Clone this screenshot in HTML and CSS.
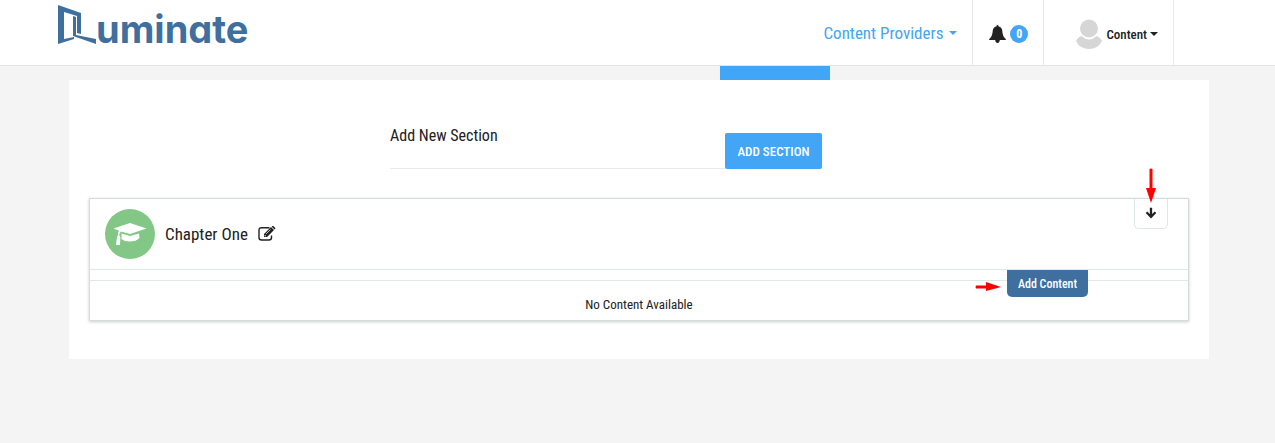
FILE: index.html
```html
<!DOCTYPE html>
<html lang="en">
<head>
<meta charset="utf-8">
<meta name="viewport" content="width=device-width, initial-scale=1">
<title>Luminate</title>
<link rel="stylesheet" href="styles.css">
</head>
<body>
<header class="topbar">
  <a class="logo" href="#" aria-label="Luminate">
    <svg class="logo-mark" viewBox="0 0 38 40" aria-hidden="true">
      <path fill="#3e6f9f" fill-rule="evenodd" d="M0 0L23 8V29L19 28V11L6 7V34L16 32V34L0 39Z"/>
      <path fill="#3e6f9f" d="M15 11L18 12V30L38 34V39L15 31Z"/>
    </svg>
    <span class="logo-text">uminate</span>
  </a>
  <nav class="nav">
    <button class="nav-item providers" type="button">Content Providers <span class="caret"></span></button>
    <button class="nav-item alerts" type="button" aria-label="Notifications">
      <svg class="bell" viewBox="0 0 17 18" aria-hidden="true"><path fill="#222" d="M8.500 0Q9.700 0 9.700 1.500Q13 2.300 13.300 6Q13.400 11 16.800 14V15H10.800Q10.500 18 8.500 18Q6.500 18 6.200 15H.2V14Q3.600 11 3.700 6Q4 2.300 7.300 1.500Q7.300 0 8.500 0Z"/></svg>
      <span class="badge">0</span>
    </button>
    <button class="nav-item account" type="button">
      <svg class="avatar" viewBox="0 0 28 31" aria-hidden="true"><path fill="#d6d6d6" d="M1 22Q3 18 6.500 17Q14 24 21.500 17Q25 18 27 22Q23 30 14 30Q5 30 1 22Z"/><circle cx="14" cy="9.500" r="9" fill="#d6d6d6"/></svg>
      <span>Content</span><span class="caret"></span>
    </button>
  </nav>
</header>
<div class="strip"><span class="strip-tab"></span></div>
<main class="page">
  <form class="add-form">
    <div class="field">
      <label for="section">Add New Section</label>
      <input id="section" type="text">
    </div>
    <button class="add-section" type="button">ADD SECTION</button>
  </form>
  <section class="chapter">
    <div class="chapter-head">
      <span class="chapter-icon">
        <svg viewBox="0 0 34 24" aria-hidden="true"><path fill="#fff" d="M17 1L33.500 6.500L17 12L8 9.500Q6.500 10.500 6.200 13L7.300 15L7 23H3L4 15L5 13Q5 10 6 8.700L.5 6.500ZM8.500 11.500L17 14L26 11.500L26.500 16Q23 19.500 17 19.500Q11 19.500 8.500 17Z"/></svg>
      </span>
      <h2>Chapter One</h2>
      <button class="edit" type="button" aria-label="Edit chapter">
        <svg viewBox="0 0 18 16" aria-hidden="true"><path fill="none" stroke="#222" stroke-width="1.400" d="M11.500 1.700H3.500Q1 1.700 1 4.200V11.500Q1 14 3.500 14H11Q13.500 14 13.500 11.500V9.500"/><path fill="#222" d="M6 8L13 1L16 4L9 11H6ZM13.700.7L14.400 0H15.400L17.300 2V2.800L16.600 3.500Z"/><path d="M8 8L12.500 3.500M7 9V10H8" fill="none" stroke="#fff" stroke-width=".7"/></svg>
      </button>
    </div>
    <div class="chapter-gap"></div>
    <p class="empty">No Content Available</p>
    <button class="toggle" type="button" aria-label="Expand chapter"><svg viewBox="0 0 12 12" aria-hidden="true"><path fill="none" stroke="#222" stroke-width="2.300" d="M6 .8V10M1.500 5.300L6 9.800L10.500 5.300"/></svg></button>
    <button class="add-content" type="button">Add Content</button>
    <svg class="pointer pointer-down" viewBox="0 0 10 35" aria-hidden="true"><path fill="#f00" d="M3.500 1Q5 0 6.500 1V20H10L5 35L0 20H3.500Z"/></svg>
    <svg class="pointer pointer-right" viewBox="0 0 26 10" aria-hidden="true"><path fill="#f00" d="M1 3.500H11V0L26 5L11 9V6.500H1Q0 5 1 3.500Z"/></svg>
  </section>
</main>
</body>
</html>
```
FILE: styles.css
```css
* { box-sizing: border-box; }
body { margin: 0; background: #f4f4f4; color: #212121; font-family: "Roboto Condensed", "Liberation Sans Narrow", Roboto, sans-serif; font-size: 16px; }
button { margin: 0; padding: 0; border: 0; background: none; color: inherit; font: inherit; cursor: pointer; }
svg { display: block; }
.topbar { display: flex; justify-content: space-between; height: 66px; padding: 0 101px 0 58px; background: #fff; border-bottom: 1px solid #e4e4e4; }
.logo { display: flex; align-items: flex-start; padding-top: 5px; color: #3e6f9f; text-decoration: none; }
.logo-mark { width: 38px; height: 40px; }
.logo-text { font: 700 38px/49px Inter, Lato, sans-serif; font-feature-settings: "cv11"; }
.nav { display: flex; }
.nav-item { display: flex; align-items: center; border-right: 1px solid #e8e8e8; }
.providers { gap: 6px; padding: 1px 15px 0 0; color: #42a5f5; font-size: 17px; }
.caret { border: 4px solid transparent; border-top-color: currentColor; border-bottom: 0; }
.alerts { gap: 4px; padding: 2px 15px 0 16px; }
.bell { width: 17px; height: 18px; }
.badge { width: 18px; height: 18px; border-radius: 50%; background: #42a5f5; color: #fff; font-size: 12px; font-weight: 700; line-height: 18px; text-align: center; }
.account { gap: 3px; padding: 3px 15px 0 31px; font-size: 13px; font-weight: 500; }
.avatar { width: 28px; height: 31px; }
.strip { display: flex; height: 14px; padding-left: 720px; }
.strip-tab { width: 110px; background: #42a5f5; }
.page { margin: 0 66px 0 69px; padding: 44px 20px 38px; background: #fff; }
.add-form { display: flex; align-items: flex-end; margin: 0 367px 29px 301px; }
.field { display: flex; flex: 1; flex-direction: column; }
.field label { line-height: 24px; }
.field input { width: 100%; height: 21px; padding: 0; border: 0; border-bottom: 1px solid #e9e9e9; background: none; font: inherit; outline: 0; }
.add-section { width: 97px; height: 36px; border-radius: 2px; background: #42a5f5; color: #fff; font-size: 13px; font-weight: 500; }
.chapter { position: relative; border: 1px solid #d5dcdc; box-shadow: 0 1px 3px #0003; }
.chapter-head { display: flex; align-items: center; gap: 10px; height: 71px; padding: 0 15px; border-bottom: 1px solid #e2e7e7; }
.chapter-icon { display: flex; align-items: center; justify-content: center; width: 50px; height: 50px; border-radius: 50%; background: #82c785; }
.chapter-icon svg { width: 34px; height: 24px; }
.chapter-head h2 { margin: 0; font-size: 17px; font-weight: 400; }
.edit svg { width: 18px; height: 16px; }
.chapter-gap { height: 11px; border-bottom: 1px solid #e2e7e7; }
.empty { margin: 0; padding: 16px 0 7px; font-size: 13px; line-height: 16px; text-align: center; }
.toggle { position: absolute; top: 0; right: 20px; display: flex; align-items: center; justify-content: center; width: 34px; height: 30px; padding-bottom: 2px; border: 1px solid #e0e5e5; border-top: 0; border-radius: 0 0 5px 5px; }
.toggle svg { width: 12px; height: 12px; }
.add-content { position: absolute; top: 71px; right: 100px; width: 81px; height: 27px; border-radius: 0 0 5px 5px; background: #3e6f9f; color: #fff; font-size: 12px; font-weight: 500; }
.pointer { position: absolute; }
.pointer-down { top: -31px; right: 32px; width: 10px; height: 35px; }
.pointer-right { top: 83px; right: 187px; width: 26px; height: 10px; }
```
